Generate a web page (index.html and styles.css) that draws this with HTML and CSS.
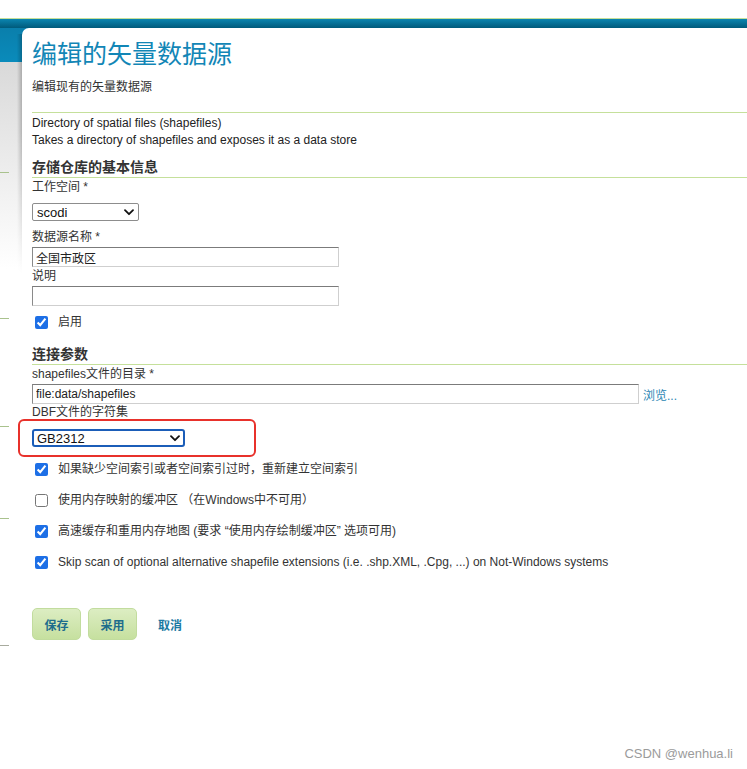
FILE: index.html
```html
<!DOCTYPE html>
<html lang="zh-CN">
<head>
<meta charset="utf-8">
<title>编辑的矢量数据源</title>
<link rel="stylesheet" href="styles.css">
</head>
<body>
<div class="topgap"></div>
<div class="page">
  <aside class="sidebar">
    <div class="side-head"></div>
    <div class="side-line s1"></div>
    <div class="side-line s2"></div>
    <div class="side-line s3"></div>
    <div class="side-line s4"></div>
    <div class="side-line s5"></div>
  </aside>
  <main class="panel">
    <h1 class="title">编辑的矢量数据源</h1>
    <p class="subtitle">编辑现有的矢量数据源</p>
    <hr class="divider">
    <div class="store-desc">
      <div>Directory of spatial files (shapefiles)</div>
      <div>Takes a directory of shapefiles and exposes it as a data store</div>
    </div>

    <h2 class="section first">存储仓库的基本信息</h2>
    <label class="field-label l-ws">工作空间 *</label>
    <div class="select-wrap ws">
      <select class="select"><option>scodi</option></select>
      <svg class="chev" viewBox="0 0 10 7" width="10" height="7"><path d="M1 1.2 L5 5.2 L9 1.2" fill="none" stroke="#111" stroke-width="1.8" stroke-linecap="round" stroke-linejoin="round"/></svg>
    </div>
    <label class="field-label l-name">数据源名称 *</label>
    <input class="text-input short" type="text" value="全国市政区">
    <label class="field-label l-desc">说明</label>
    <input class="text-input short" type="text" value="">
    <div class="check-row enabled">
      <input type="checkbox" checked>
      <span>启用</span>
    </div>

    <h2 class="section second">连接参数</h2>
    <label class="field-label l-dir">shapefiles文件的目录 *</label>
    <div class="path-row">
      <input class="text-input long" type="text" value="file:data/shapefiles">
      <a class="browse" href="#">浏览...</a>
    </div>
    <label class="field-label l-dbf">DBF文件的字符集</label>
    <div class="select-wrap cs">
      <select class="select focused"><option>GB2312</option></select>
      <svg class="chev" viewBox="0 0 10 7" width="10" height="7"><path d="M1 1.2 L5 5.2 L9 1.2" fill="none" stroke="#111" stroke-width="1.8" stroke-linecap="round" stroke-linejoin="round"/></svg>
      <div class="annotation"></div>
    </div>

    <div class="check-row opt first-opt">
      <input type="checkbox" checked>
      <span>如果缺少空间索引或者空间索引过时，重新建立空间索引</span>
    </div>
    <div class="check-row opt">
      <input type="checkbox">
      <span>使用内存映射的缓冲区 （在Windows中不可用）</span>
    </div>
    <div class="check-row opt">
      <input type="checkbox" checked>
      <span>高速缓存和重用内存地图 (要求 “使用内存绘制缓冲区” 选项可用)</span>
    </div>
    <div class="check-row opt">
      <input type="checkbox" checked>
      <span>Skip scan of optional alternative shapefile extensions (i.e. .shp.XML, .Cpg, ...) on Not-Windows systems</span>
    </div>

    <div class="actions">
      <button class="btn" type="button">保存</button>
      <button class="btn" type="button">采用</button>
      <a class="cancel" href="#">取消</a>
    </div>
  </main>
</div>
<div class="watermark">CSDN @wenhua.li</div>
</body>
</html>
```

FILE: styles.css
```css
html, body {
  margin: 0;
  padding: 0;
}
body {
  position: relative;
  width: 747px;
  height: 769px;
  overflow: hidden;
  background: #fff;
  font-family: "Liberation Sans", "Noto Sans CJK SC", sans-serif;
  font-size: 12px;
  color: #333;
}
.topgap {
  height: 18px;
  background: #fff;
}
.page {
  display: grid;
  grid-template-columns: 22px 1fr;
  min-height: 750px;
  border-top: 1px solid #c5e09b;
  background: linear-gradient(to bottom,
    #0b85b0 0, #005a7b 9px, #0a7fac 9px, #0a8bbb 43px,
    #d9d9d9 43px, #f6f6f6 200px, #fff 250px);
}
.sidebar {
  display: flex;
  flex-direction: column;
}
.side-head {
  height: 43px;
}
.side-line {
  width: 9px;
  height: 1px;
  background: #a9c28d;
}
.s1 { margin-top: 110px; }
.s2 { margin-top: 145px; }
.s3 { margin-top: 107px; }
.s4 { margin-top: 91px; }
.s5 { margin-top: 126px; background: #a8ab9e; }

.panel {
  position: relative;
  margin-top: 9px;
  background: #fff;
  border-top-left-radius: 7px;
  padding: 0 0 0 10px;
}
.panel::before {
  content: "";
  position: absolute;
  left: -5px;
  top: 6px;
  width: 5px;
  height: 240px;
  background: linear-gradient(to right, rgba(0,0,0,0), rgba(0,0,0,0.22));
  -webkit-mask-image: linear-gradient(to bottom, #000 40%, transparent);
  mask-image: linear-gradient(to bottom, #000 40%, transparent);
}
.title {
  margin: 0;
  padding-top: 9px;
  font-family: "Noto Sans CJK SC", sans-serif;
  font-size: 25px;
  line-height: 30px;
  font-weight: normal;
  color: #1286b6;
}
.subtitle {
  margin: 12px 0 0;
  line-height: 16px;
  color: #333;
}
.divider {
  margin: 17px 0 0;
  border: 0;
  height: 1px;
  background: #c5e09b;
}
.store-desc {
  margin-top: 2px;
  line-height: 17px;
  color: #222;
}
.section {
  margin: 9px 0 0;
  font-size: 14px;
  font-weight: bold;
  line-height: 19px;
  color: #333;
  border-bottom: 1px solid #c5e09b;
}
.section.second {
  margin-top: 15px;
}
.field-label {
  display: block;
  line-height: 16px;
  color: #333;
}
.l-ws { margin-top: 1px; }
.l-name { margin-top: 8px; }
.l-desc { margin-top: 1px; }
.l-dir { margin-top: 1px; }
.l-dbf { margin-top: 0; }

.select-wrap {
  position: relative;
  height: 18px;
}
.select-wrap.ws {
  width: 107px;
  margin-top: 8px;
}
.select-wrap.cs {
  width: 153px;
  margin-top: 9px;
}
.select {
  -webkit-appearance: none;
  appearance: none;
  display: block;
  box-sizing: border-box;
  width: 100%;
  height: 100%;
  margin: 0;
  padding: 0 0 0 4px;
  border: 1px solid #8d8d8d;
  border-radius: 2px;
  background: #fff;
  font-family: "Liberation Sans", sans-serif;
  font-size: 13px;
  color: #111;
}
.select.focused {
  border: 2px solid #1b5db8;
  border-radius: 3px;
  padding-left: 3px;
}
.chev {
  position: absolute;
  right: 5px;
  top: 6px;
  pointer-events: none;
}
.annotation {
  position: absolute;
  left: -14px;
  top: -10px;
  width: 238px;
  height: 38px;
  box-sizing: border-box;
  border: 2px solid #e8312b;
  border-radius: 6px;
  pointer-events: none;
}

.text-input {
  display: block;
  box-sizing: border-box;
  height: 20px;
  margin: 2px 0 0;
  padding: 0 3px;
  border: 1px solid;
  border-color: #7b7b7b #cfcfcf #cfcfcf #8a8a8a;
  background: #fff;
  font-family: "Liberation Sans", "Noto Sans CJK SC", sans-serif;
  font-size: 12px;
  color: #222;
}
.text-input.short {
  width: 307px;
}
.path-row {
  display: flex;
  align-items: center;
  gap: 4px;
  margin-top: 2px;
}
.path-row .text-input {
  margin: 0;
}
.text-input.long {
  width: 607px;
}
.browse {
  color: #2a86b3;
  text-decoration: none;
  font-size: 12px;
}

.check-row {
  display: flex;
  align-items: center;
  gap: 10px;
  height: 16px;
  line-height: 16px;
  color: #333;
}
.check-row input {
  width: 13px;
  height: 13px;
  margin: 0 0 0 3px;
  accent-color: #1d6fe6;
}
.check-row.enabled {
  margin-top: 8px;
}
.check-row.opt {
  margin-top: 15px;
}
.check-row.opt.first-opt {
  margin-top: 14px;
}

.actions {
  display: flex;
  align-items: center;
  margin-top: 38px;
}
.btn {
  width: 49px;
  height: 32px;
  margin: 0 7px 0 0;
  padding: 0;
  border: 1px solid #c2dc9e;
  border-radius: 5px;
  background: linear-gradient(to bottom, #dcedc2, #c6e09f);
  font-family: "Noto Sans CJK SC", sans-serif;
  font-size: 12px;
  font-weight: bold;
  color: #1e6d8c;
}
.cancel {
  margin-left: 14px;
  font-family: "Noto Sans CJK SC", sans-serif;
  font-size: 12px;
  font-weight: bold;
  color: #1b7aa2;
  text-decoration: none;
}
.watermark {
  position: absolute;
  right: 14px;
  top: 746px;
  font-family: "Liberation Sans", sans-serif;
  font-size: 13px;
  color: #9b9b9b;
}
```
